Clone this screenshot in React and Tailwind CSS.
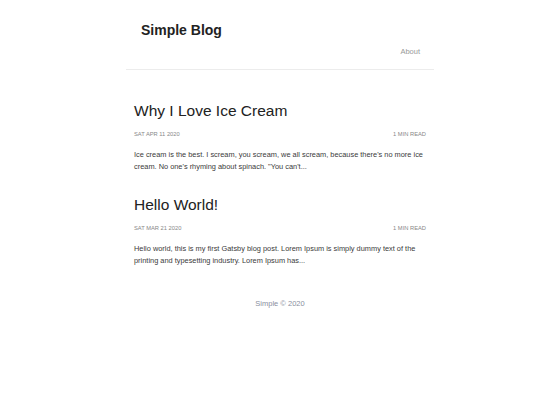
export default function App() {
  const posts = [
    {
      title: "Why I Love Ice Cream",
      date: "SAT APR 11 2020",
      excerpt:
        "Ice cream is the best. I scream, you scream, we all scream, because there's no more ice cream. No one's rhyming about spinach. \"You can't...",
    },
    {
      title: "Hello World!",
      date: "SAT MAR 21 2020",
      excerpt:
        "Hello world, this is my first Gatsby blog post. Lorem Ipsum is simply dummy text of the printing and typesetting industry. Lorem Ipsum has...",
    },
  ];
  return (
    <div className="min-h-[420px] w-[560px] bg-white font-['Liberation_Sans',Arial,sans-serif]">
      <header className="mx-auto w-[308px] border-b border-[#ececec]">
        <div className="pl-[15px] pt-[20px] text-[14px] font-bold leading-[20px] text-[#222]">
          Simple Blog
        </div>
        <div className="flex justify-end pr-[14px] pt-[7px] pb-[12px]">
          <span className="text-[7.5px] leading-[10px] text-[#999]">About</span>
        </div>
      </header>
      <main className="mx-auto w-[292px] pt-[31px]">
        {posts.map((p) => (
          <article key={p.title} className="mb-[22px]">
            <h2 className="text-[15.5px] leading-[20px] text-[#222]">{p.title}</h2>
            <div className="mt-[9px] flex justify-between text-[5.75px] leading-[8px] text-[#888]">
              <span>{p.date}</span>
              <span>1 MIN READ</span>
            </div>
            <p className="mt-[11px] text-[7.4px] leading-[12px] text-[#3a3a3a]">{p.excerpt}</p>
          </article>
        ))}
      </main>
      <footer className="pt-[10px] text-center text-[7.5px] leading-[10px] text-[#8a90a0]">
        Simple © 2020
      </footer>
    </div>
  );
}
